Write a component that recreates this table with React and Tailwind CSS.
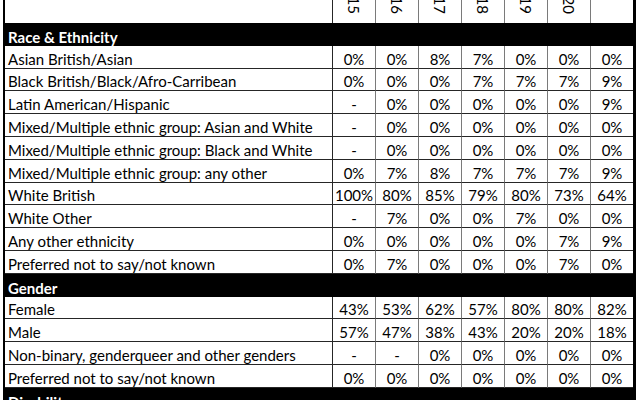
import React from 'react';

const years = ['2014/15', '2015/16', '2016/17', '2017/18', '2018/19', '2019/20', ''];

const sections = [
  {
    title: 'Race & Ethnicity',
    rows: [
      ['Asian British/Asian', ['0%', '0%', '8%', '7%', '0%', '0%', '0%']],
      ['Black British/Black/Afro-Carribean', ['0%', '0%', '0%', '7%', '7%', '7%', '9%']],
      ['Latin American/Hispanic', ['-', '0%', '0%', '0%', '0%', '0%', '9%']],
      ['Mixed/Multiple ethnic group: Asian and White', ['-', '0%', '0%', '0%', '0%', '0%', '0%']],
      ['Mixed/Multiple ethnic group: Black and White', ['-', '0%', '0%', '0%', '0%', '0%', '0%']],
      ['Mixed/Multiple ethnic group: any other', ['0%', '7%', '8%', '7%', '7%', '7%', '9%']],
      ['White British', ['100%', '80%', '85%', '79%', '80%', '73%', '64%']],
      ['White Other', ['-', '7%', '0%', '0%', '7%', '0%', '0%']],
      ['Any other ethnicity', ['0%', '0%', '0%', '0%', '0%', '7%', '9%']],
      ['Preferred not to say/not known', ['0%', '7%', '0%', '0%', '0%', '7%', '0%']],
    ],
  },
  {
    title: 'Gender',
    rows: [
      ['Female', ['43%', '53%', '62%', '57%', '80%', '80%', '82%']],
      ['Male', ['57%', '47%', '38%', '43%', '20%', '20%', '18%']],
      ['Non-binary, genderqueer and other genders', ['-', '-', '0%', '0%', '0%', '0%', '0%']],
      ['Preferred not to say/not known', ['0%', '0%', '0%', '0%', '0%', '0%', '0%']],
    ],
  },
  { title: 'Disability', rows: [] },
];

const cols = 'grid grid-cols-[328px_repeat(6,43px)_42px]';

function SectionHead({ title }) {
  return (
    <div className="flex h-[22.8px] items-end bg-black pl-[3px] text-[15px] font-bold leading-[18px] text-white">
      {title}
    </div>
  );
}

function Row({ label, values }) {
  return (
    <div className={`${cols} h-[22.8px]`}>
      <div className="flex items-end border-b border-r border-[#262626] pl-[3px] leading-[18px]">{label}</div>
      {values.map((v, i) => (
        <div
          key={i}
          className={`flex items-end justify-center border-b border-[#262626] leading-[18px] ${
            i < 6 ? 'border-r border-r-[#7a7a7a]' : ''
          }`}
        >
          {v}
        </div>
      ))}
    </div>
  );
}

export default function App() {
  return (
    <div className="h-[400px] w-[640px] overflow-hidden bg-white font-['Lato',sans-serif] text-[15px] text-black">
      <div className="ml-[3px] w-[633px] border-l-2 border-r-[3px] border-black">
        <div className={`${cols} h-[23px]`}>
          <div className="border-r border-[#262626]" />
          {years.map((y, i) => (
            <div
              key={i}
              className={`flex items-end justify-center overflow-hidden pb-[9px] ${i < 6 ? 'border-r border-[#7a7a7a]' : ''}`}
            >
              <span className="whitespace-nowrap leading-[18px] [writing-mode:vertical-rl]">{y}</span>
            </div>
          ))}
        </div>
        {sections.map((s) => (
          <div key={s.title}>
            <SectionHead title={s.title} />
            {s.rows.map(([label, values]) => (
              <Row key={label} label={label} values={values} />
            ))}
          </div>
        ))}
      </div>
    </div>
  );
}
